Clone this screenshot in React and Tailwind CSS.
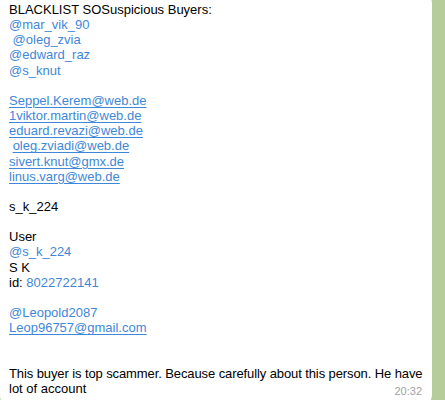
import React from 'react';

const handles = ['@mar_vik_90', ' @oleg_zvia', '@edward_raz', '@s_knut'];
const emails = [
  'Seppel.Kerem@web.de',
  '1viktor.martin@web.de',
  'eduard.revazi@web.de',
  ' oleg.zviadi@web.de',
  'sivert.knut@gmx.de',
  'linus.varg@web.de',
];

function Mention({ children }) {
  return <div className="text-[#3f87d8]">{children}</div>;
}

function Email({ children }) {
  const lead = children.startsWith(' ');
  return (
    <div className="text-[#3f87d8] whitespace-pre">
      {lead && ' '}
      <span className="underline underline-offset-[2px] decoration-[1px]">{children.trim()}</span>
    </div>
  );
}

const Blank = () => <div className="h-[15.15px]" />;

export default function App() {
  return (
    <div className="h-[400px] w-[445px] overflow-hidden bg-[#b7cc9b]">
      <div
        className="w-[432px] -mt-[12px] bg-white rounded-tl-[12px] rounded-tr-[16px] rounded-br-[16px] rounded-bl-[15px] pt-[14px] pl-[9px] pr-0 pb-[14px] text-[13px] leading-[15.15px] text-black"
        style={{ fontFamily: '"Liberation Sans", Arial, sans-serif' }}
      >
        <div>BLACKLIST SOSuspicious Buyers:</div>
        {handles.map((h) => (
          <Mention key={h}>
            <span className="whitespace-pre">{h}</span>
          </Mention>
        ))}
        <Blank />
        {emails.map((e) => (
          <Email key={e}>{e}</Email>
        ))}
        <Blank />
        <div>s_k_224</div>
        <Blank />
        <div>User</div>
        <Mention>@s_k_224</Mention>
        <div>S K</div>
        <div>
          id: <span className="text-[#3f87d8]">8022722141</span>
        </div>
        <Blank />
        <Mention>@Leopold2087</Mention>
        <Email>Leop96757@gmail.com</Email>
        <Blank />
        <Blank />
        <div className="whitespace-nowrap tracking-[-0.1px]">
          This buyer is top scammer. Because carefully about this person. He have
        </div>
        <div className="flex items-end justify-between pr-[10px]">
          <span>lot of account</span>
          <span className="text-[11px] leading-[13px] text-[#a2a2a2] translate-y-[2px]">20:32</span>
        </div>
      </div>
    </div>
  );
}
